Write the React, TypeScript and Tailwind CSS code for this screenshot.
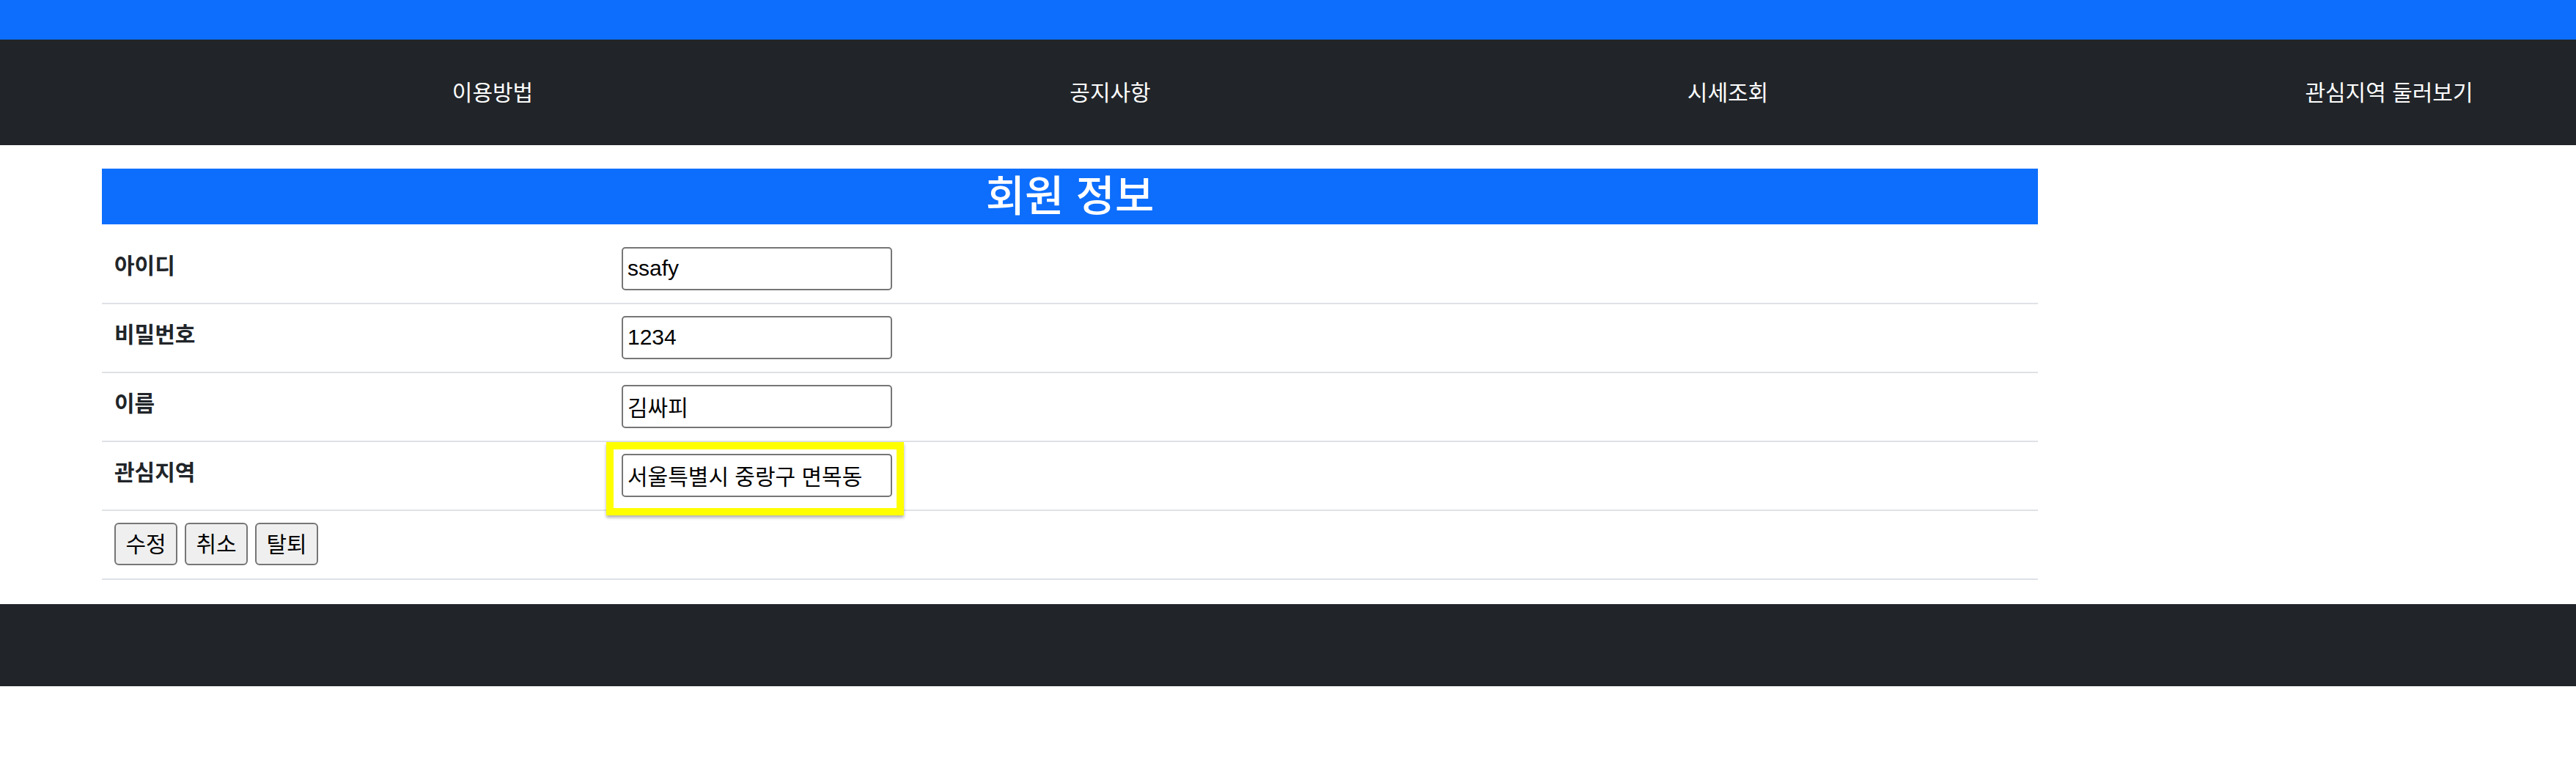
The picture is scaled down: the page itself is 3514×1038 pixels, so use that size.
import React from "react";

const FONT = { fontFamily: '"Liberation Sans", "Noto Sans CJK KR", sans-serif' };

function Row({ label, children, last }: { label: string; children: React.ReactNode; last?: boolean }) {
  return (
    <div className="relative grid grid-cols-[693px_1fr] h-[94px] border-b-2 border-[#dee2e6]">
      <div className="flex items-center px-[17px] pb-[10px] text-[30px] font-bold text-[#212529]">{label}</div>
      <div className="relative flex items-center px-[16px] pb-[2px]">{children}</div>
    </div>
  );
}

function Field({ value }: { value: string }) {
  return (
    <input
      readOnly
      value={value}
      className="w-[369px] h-[59px] border-2 border-[#767676] rounded-[5px] bg-white px-[6px] text-[30px] text-black outline-none"
      style={FONT}
    />
  );
}

function Btn({ children }: { children: React.ReactNode }) {
  return (
    <button className="w-[86px] h-[58px] bg-[#efefef] border-2 border-[#767676] rounded-[6px] text-[30px] text-black flex items-center justify-center">
      {children}
    </button>
  );
}

export default function App() {
  return (
    <div className="w-[3514px] bg-white" style={FONT}>
      <div className="h-[54px] bg-[#0d6efd]" />
      <nav className="h-[144px] bg-[#212529] overflow-hidden">
        <div className="flex h-full items-center pl-[251px] text-white text-[30px]">
          <div className="w-[842px] shrink-0 text-center">이용방법</div>
          <div className="w-[843px] shrink-0 text-center">공지사항</div>
          <div className="w-[842px] shrink-0 text-center">시세조회</div>
          <div className="w-[962px] shrink-0 text-center">관심지역 둘러보기</div>
        </div>
      </nav>

      <main className="ml-[139px] w-[2641px] pt-[32px] pb-[33px]">
        <h2 className="h-[76px] bg-[#0d6efd] text-white text-[58px] font-medium leading-[76px] text-center">회원 정보</h2>
        <div className="mt-[15px]">
          <Row label="아이디">
            <Field value="ssafy" />
          </Row>
          <Row label="비밀번호">
            <Field value="1234" />
          </Row>
          <Row label="이름">
            <Field value="김싸피" />
          </Row>
          <Row label="관심지역">
            <Field value="서울특별시 중랑구 면목동" />
            <div className="absolute left-[-5px] top-0 w-[406px] h-[100px] border-[10px] border-[#ffff00] shadow-[0_3px_4px_rgba(0,0,0,0.3)] pointer-events-none z-10" />
          </Row>
          <div className="h-[94px] border-b-2 border-[#dee2e6] flex items-center gap-[10px] px-[17px] pb-[2px]">
            <Btn>수정</Btn>
            <Btn>취소</Btn>
            <Btn>탈퇴</Btn>
          </div>
        </div>
      </main>

      <footer className="h-[112px] bg-[#212529]" />
    </div>
  );
}
